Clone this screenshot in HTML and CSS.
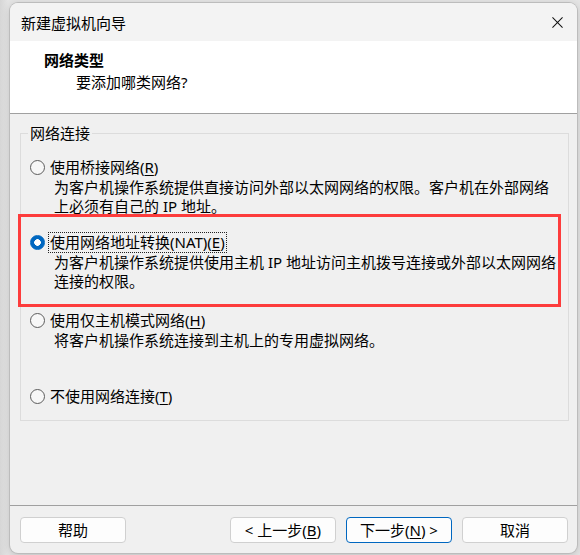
FILE: index.html
```html
<!DOCTYPE html>
<html lang="zh-CN">
<head>
<meta charset="utf-8">
<title>新建虚拟机向导</title>
<link rel="stylesheet" href="styles.css">
</head>
<body>
<div class="window">
  <div class="titlebar">
    <span class="title">新建虚拟机向导</span>
    <svg class="close" width="12" height="12" viewBox="0 0 12 12"><path d="M0.5 0.5L11.5 11.5M11.5 0.5L0.5 11.5" stroke="#111" stroke-width="1.1" fill="none"/></svg>
  </div>
  <div class="header">
    <div class="h-title">网络类型</div>
    <div class="h-sub">要添加哪类网络?</div>
  </div>
  <div class="content">
    <fieldset class="group">
      <legend>网络连接</legend>
      <div class="option opt1">
        <div class="row"><span class="radio"></span><span class="label">使用桥接网络(<u>R</u>)</span></div>
        <div class="desc">为客户机操作系统提供直接访问外部以太网网络的权限。客户机在外部网络<br>上必须有自己的 IP 地址。</div>
      </div>
      <div class="option opt2">
        <div class="row"><span class="radio on"></span><span class="label focus">使用网络地址转换(NAT)(<u>E</u>)</span></div>
        <div class="desc">为客户机操作系统提供使用主机 IP 地址访问主机拨号连接或外部以太网网络<br>连接的权限。</div>
      </div>
      <div class="option opt3">
        <div class="row"><span class="radio"></span><span class="label">使用仅主机模式网络(<u>H</u>)</span></div>
        <div class="desc">将客户机操作系统连接到主机上的专用虚拟网络。</div>
      </div>
      <div class="option opt4">
        <div class="row"><span class="radio"></span><span class="label">不使用网络连接(<u>T</u>)</span></div>
      </div>
    </fieldset>
  </div>
  <div class="footer">
    <button class="btn">帮助</button>
    <span class="spacer"></span>
    <button class="btn">&lt; 上一步(<u>B</u>)</button>
    <button class="btn primary">下一步(<u>N</u>) &gt;</button>
    <button class="btn">取消</button>
  </div>
  <div class="highlight"></div>
</div>
</body>
</html>
```

FILE: styles.css
```css
html, body {
  margin: 0;
  padding: 0;
}
body {
  width: 580px;
  height: 555px;
  overflow: hidden;
  background: linear-gradient(to right, #d6d6d6, #e4e4e4 8px, #e4e4e4);
  font-family: "Noto Sans", "Noto Sans CJK SC", sans-serif;
  font-size: 15px;
  color: #000;
}
.window {
  position: relative;
  margin: 3px 0 0 10px;
  width: 567px;
  height: 550px;
  border-radius: 8px;
  overflow: hidden;
  background: #f0f0f0;
  box-shadow: 0 0 0 1px #bcbcbc, 0 2px 8px rgba(0, 0, 0, 0.18);
  display: flex;
  flex-direction: column;
}
.titlebar {
  height: 38px;
  flex: none;
  background: #f3f3f3;
  display: flex;
  align-items: center;
  padding: 0 14px 0 11px;
}
.title {
  flex: 1;
  line-height: 20px;
  padding-top: 1px;
}
.close {
  display: block;
  width: 11px;
  height: 11px;
}
.header {
  height: 72px;
  flex: none;
  background: #fff;
  border-bottom: 1px solid #a0a0a0;
  box-sizing: content-box;
}
.h-title {
  font-weight: bold;
  line-height: 20px;
  padding: 9px 0 0 34px;
}
.h-sub {
  line-height: 20px;
  padding: 2px 0 0 66px;
}
.content {
  height: 391px;
  flex: none;
  padding: 10px 8px 0 10px;
  box-sizing: border-box;
}
.group {
  margin: 0;
  border: 1px solid #dcdcdc;
  padding: 0 9px 13px 9px;
  min-width: 0;
}
.group legend {
  line-height: 18px;
  padding: 0 2px;
  margin-left: -2px;
}
.option.opt1 { margin-top: 15px; }
.option.opt2 { margin-top: 16px; }
.option.opt3 { margin-top: 19px; }
.option.opt4 { margin-top: 36px; }
.row {
  display: flex;
  align-items: center;
  height: 21px;
}
.radio {
  width: 15px;
  height: 15px;
  box-sizing: border-box;
  border: 1px solid #5c5c5c;
  border-radius: 50%;
  background: #f7f7f7;
  flex: none;
  margin-right: 3px;
}
.radio.on {
  border-color: #0067c0;
  background: radial-gradient(circle, #fff 0 3px, #0067c0 3.6px);
}
.label {
  line-height: 19px;
  padding: 0 1px;
  border: 1px solid transparent;
}
.label.focus {
  border: 1px dotted #222;
}
u {
  text-decoration: underline;
  text-underline-offset: 2px;
}
.desc {
  line-height: 19px;
  padding-left: 24px;
  white-space: nowrap;
}
.footer {
  flex: 1;
  border-top: 1px solid #a0a0a0;
  display: flex;
  align-items: flex-start;
  gap: 10px;
  padding: 11px 9px 0 10px;
}
.spacer {
  flex: 1;
}
.btn {
  width: 106px;
  height: 26px;
  box-sizing: border-box;
  border: 1px solid #d0d0d0;
  border-radius: 4px;
  background: #fdfdfd;
  font-family: "Noto Sans", "Noto Sans CJK SC", sans-serif;
  font-size: 15px;
  line-height: 22px;
  color: #000;
  padding: 0;
}
.btn.primary {
  border-color: #0067c0;
}
.highlight {
  position: absolute;
  left: 8px;
  top: 211px;
  width: 543px;
  height: 93px;
  box-sizing: border-box;
  border: 3px solid #fd3c3c;
  pointer-events: none;
}
```
